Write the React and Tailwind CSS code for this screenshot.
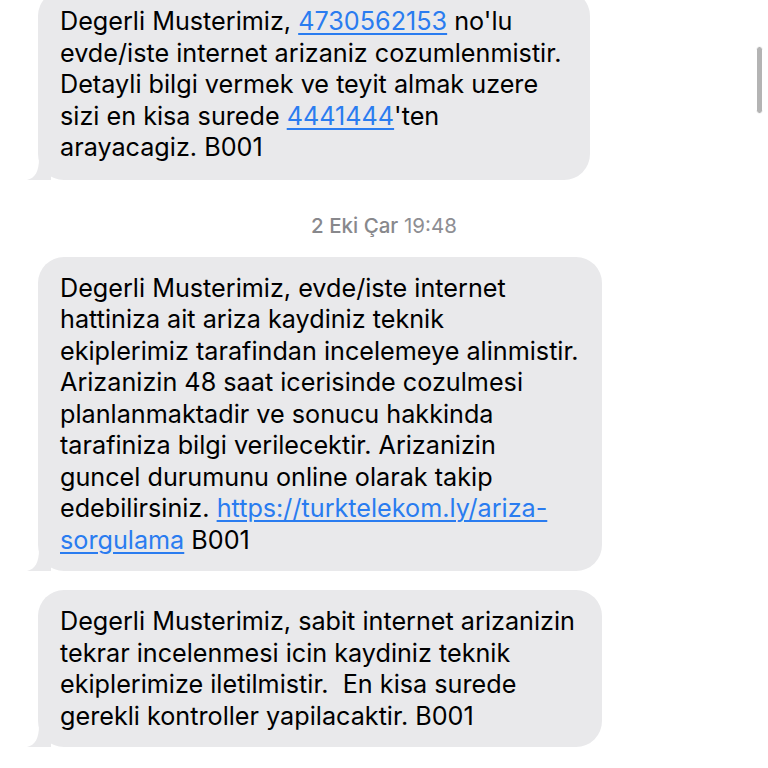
import React from 'react';

const font = { fontFamily: 'Inter, "Liberation Sans", sans-serif' };

const Link = ({ children }) => (
  <span className="text-[#2a7cf0] underline decoration-[1.5px] underline-offset-[3px]">{children}</span>
);

// gelen mesaj balonu (sol alt kuyruklu)
const Bubble = ({ children, className = '' }) => (
  <div className={`relative ml-[38px] w-fit rounded-[26px] bg-[#e9e9eb] pl-[22px] text-[25.2px] leading-[31.5px] text-black ${className}`}>
    {children}
    <svg className="absolute -left-[11px] bottom-0" width="24" height="22" viewBox="0 0 24 22">
      <path d="M24 0 L24 22 L0 22 C8 20 12 14 12 0 Z" fill="#e9e9eb" />
    </svg>
  </div>
);

export default function App() {
  return (
    <div className="relative h-[768px] w-[768px] overflow-hidden bg-white" style={font}>
      <div className="-mt-[10px] flex flex-col">
        <Bubble className="pt-4 pb-4 pr-[29px]">
          Degerli Musterimiz, <Link>4730562153</Link> no'lu
          <br />
          evde/iste internet arizaniz cozumlenmistir.
          <br />
          Detayli bilgi vermek ve teyit almak uzere
          <br />
          sizi en kisa surede <Link>4441444</Link>'ten
          <br />
          arayacagiz. B001
        </Bubble>

        <div className="mt-[33px] mb-[19px] text-center text-[20.5px] leading-[25px] text-[#8e8e93]">
          <span className="font-medium text-[#88888c]">2 Eki Çar</span> 19:48
        </div>

        <Bubble className="pt-4 pb-[15px] pr-[23px]">
          Degerli Musterimiz, evde/iste internet
          <br />
          hattiniza ait ariza kaydiniz teknik
          <br />
          ekiplerimiz tarafindan incelemeye alinmistir.
          <br />
          Arizanizin 48 saat icerisinde cozulmesi
          <br />
          planlanmaktadir ve sonucu hakkinda
          <br />
          tarafiniza bilgi verilecektir. Arizanizin
          <br />
          guncel durumunu online olarak takip
          <br />
          edebilirsiniz. <Link>https://turktelekom.ly/ariza-</Link>
          <br />
          <Link>sorgulama</Link> B001
        </Bubble>

        <Bubble className="mt-[19px] pt-4 pb-[15px] pr-[27px]">
          Degerli Musterimiz, sabit internet arizanizin
          <br />
          tekrar incelenmesi icin kaydiniz teknik
          <br />
          ekiplerimize iletilmistir.&nbsp; En kisa surede
          <br />
          gerekli kontroller yapilacaktir. B001
        </Bubble>
      </div>

      {/* kaydirma cubugu */}
      <div className="absolute right-[5px] top-[46px] h-[68px] w-[7px] rounded-full border border-white bg-[#b4b4b4]" />
    </div>
  );
}
